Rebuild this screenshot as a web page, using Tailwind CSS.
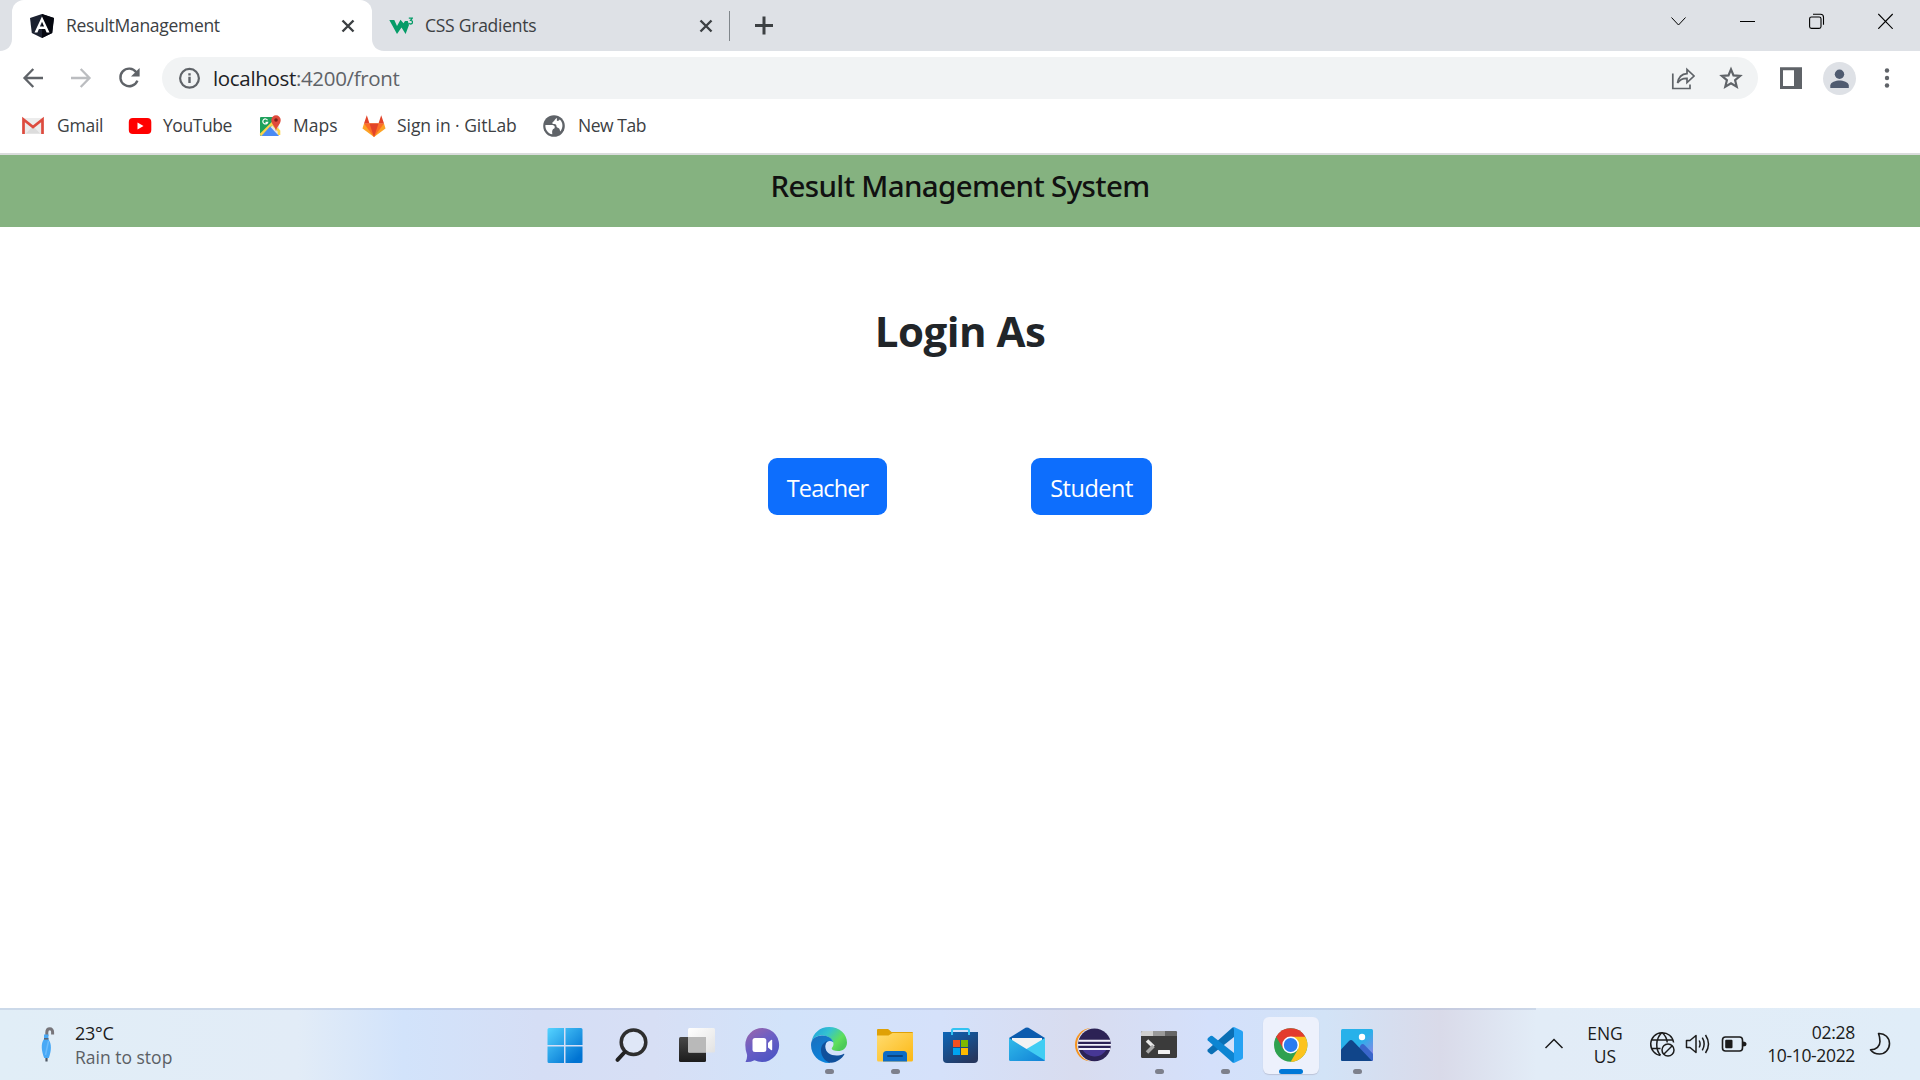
<!DOCTYPE html>
<html lang="en">
<head>
<meta charset="utf-8">
<title>ResultManagement</title>
<script src="https://cdn.jsdelivr.net/npm/@tailwindcss/browser@4"></script>
</head>
<body class="w-[1920px] h-[1080px] overflow-hidden bg-white flex flex-col font-['Open_Sans','Noto_Sans',sans-serif] text-[#3c4043]">

<!-- Tab strip -->
<header class="h-[51px] shrink-0 bg-[#dee1e6] flex items-stretch">
  <svg class="w-3 h-[51px] shrink-0" viewBox="0 0 12 51"><path d="M0 51C7 51 12 46 12 39V51Z" fill="#fff"/></svg>
  <div class="w-[360px] shrink-0 bg-white rounded-t-xl flex items-center pl-[18px] pr-[17px]">
    <svg class="size-6 shrink-0" viewBox="0 0 24 24"><path d="M12 0L24 4L22.2 19L12 24L1.8 19L0 4Z" fill="#1b2130"/><path d="M12 0L24 4L22.2 19L12 24Z" fill="#05070f"/><path fill-rule="evenodd" d="M12 2.500L19.500 18.500H16.600L15.100 15H8.900L7.400 18.500H4.500ZM12 7.800L9.900 12.600H14.100Z" fill="#fff"/></svg>
    <span class="ml-3 grow text-[17.5px] tracking-[-0.3px] whitespace-nowrap">ResultManagement</span>
    <svg class="size-[14px] shrink-0" viewBox="0 0 14 14"><path d="M1.5 1.5L12.5 12.5M12.5 1.5L1.5 12.5" stroke="#3c4043" stroke-width="2.4"/></svg>
  </div>
  <svg class="w-3 h-[51px] shrink-0" viewBox="0 0 12 51"><path d="M12 51C5 51 0 46 0 39V51Z" fill="#fff"/></svg>
  <div class="w-[345px] shrink-0 flex items-center pl-[5px] pr-4">
    <svg class="w-6 h-[18px] shrink-0" viewBox="0 0 24 18"><path d="M0.3 3H5.3L8 9L11.5 2.8L14.5 6.2L16 4H18.8L20 8L16.6 17L12.500 10.500L8 17Z" fill="#059c68"/><path d="M19.800 1.200H23.200L21.600 3.400C24.400 3.600 24 7 21.600 7C20.600 7 20 6.600 19.600 6" fill="none" stroke="#059c68" stroke-width="1.300"/></svg>
    <span class="ml-3 grow text-[17.5px] tracking-[-0.25px] whitespace-nowrap">CSS Gradients</span>
    <svg class="size-[14px] shrink-0" viewBox="0 0 14 14"><path d="M1.5 1.5L12.5 12.5M12.5 1.5L1.5 12.5" stroke="#3c4043" stroke-width="2.4"/></svg>
  </div>
  <div class="w-px h-[30px] self-center bg-[#80868b]"></div>
  <svg class="w-[18px] h-[51px] ml-[25px] shrink-0" viewBox="0 0 18 51"><path d="M0 25.5H18M9 16.5V34.5" stroke="#3c4043" stroke-width="3"/></svg>
  <div class="ml-auto flex gap-[53px] pt-[13px] pr-[26px] text-black">
    <svg class="size-4" viewBox="0 0 16 16" fill="none" stroke="currentColor"><path d="M0.5 4.500L7.500 12L14.500 4.500"/></svg>
    <svg class="size-4" viewBox="0 0 16 16"><path d="M0 8.5H15" stroke="currentColor"/></svg>
    <svg class="size-4" viewBox="0 0 16 16" fill="none" stroke="currentColor" stroke-width="1.100"><rect x="0.600" y="4" width="11.400" height="11.400" rx="1.800"/><path d="M4 1.200H11.500C13.600 1.200 14.500 2.600 14.500 4.200V11.800"/></svg>
    <svg class="size-4" viewBox="0 0 16 16"><path d="M0.300 1L14.700 15.800M14.700 1L0.300 15.800" stroke="currentColor" stroke-width="1.100"/></svg>
  </div>
</header>

<!-- Toolbar -->
<div class="h-[54px] shrink-0 flex items-center pl-[21px] text-[#5f6368]">
  <svg class="size-6" viewBox="0 0 24 24" fill="none" stroke="currentColor" stroke-width="2.3"><path d="M22 12H3.5M12.3 3L3.5 12L12.3 21"/></svg>
  <svg class="size-6 ml-6 text-[#bbbdc0]" viewBox="0 0 24 24" fill="none" stroke="currentColor" stroke-width="2.3"><path d="M2 12H20.5M11.7 3L20.5 12L11.7 21"/></svg>
  <svg class="size-6 ml-6" viewBox="0 0 24 24"><path d="M19.3 6.2A8.8 8.8 0 1 0 20.4 14.6" fill="none" stroke="currentColor" stroke-width="2.4"/><path d="M22.6 2V10.6H14Z" fill="currentColor"/></svg>
  <div class="ml-[21px] w-[1596px] h-[42px] rounded-full bg-[#f1f3f4] flex items-center pl-[17px] pr-[15px]">
    <svg class="size-[22px]" viewBox="0 0 22 22"><circle cx="10.5" cy="11.3" r="9.4" fill="none" stroke="currentColor" stroke-width="2.200"/><path d="M10.5 9.8V16M10.5 6.2V8.4" stroke="currentColor" stroke-width="2.400"/></svg>
    <div class="ml-3 grow text-[20.5px] tracking-[-0.33px]"><span class="text-[#202124]">localhost</span>:4200/front</div>
    <svg class="size-6" viewBox="0 0 24 24" fill="none" stroke="currentColor" stroke-width="1.7"><path d="M1.8 7.5V22.5H19V18.5"/><path d="M6.5 17C7.5 10.8 10.5 8 16 7.6V3.4L23 10L16 16.6V12.4C11.5 12.2 8.8 13.8 6.5 17Z"/></svg>
    <svg class="size-6 ml-6" viewBox="0 0 24 24" fill="none" stroke="currentColor" stroke-width="2.200"><path d="M12 3.3L14.5 9.4L21.1 9.9L16.1 14.2L17.7 20.6L12 17.2L6.3 20.6L7.9 14.2L2.9 9.9L9.5 9.4Z"/></svg>
  </div>
  <svg class="size-6 ml-[21px]" viewBox="0 0 24 24"><path fill-rule="evenodd" d="M1 1.3H23V23H1ZM4 4.3V20H15V4.3Z" fill="currentColor"/></svg>
  <svg class="size-[33px] ml-5" viewBox="0 0 33 33"><circle cx="16.5" cy="16.500" r="16.5" fill="#dee1e6"/><circle cx="16.5" cy="12.3" r="4.7" fill="#4f5b70"/><path d="M7.3 26V23.5C7.3 20 13 18.4 16.5 18.4S25.8 20 25.8 23.5V26Z" fill="#4f5b70"/></svg>
  <svg class="size-6 ml-[19px]" viewBox="0 0 24 24" fill="currentColor"><circle cx="12" cy="4.5" r="2.2"/><circle cx="12" cy="12" r="2.2"/><circle cx="12" cy="19.5" r="2.2"/></svg>
</div>

<!-- Bookmarks bar -->
<nav class="h-[50px] shrink-0 flex items-start pl-[21px] border-b-2 border-[#dadcdc] text-[17.5px] whitespace-nowrap leading-[41px]">
  <div class="w-[107px] flex items-center gap-3">
    <svg class="size-6" viewBox="0 0 24 24"><rect x="1.5" y="4" width="21" height="16" rx="1" fill="#ececec"/><path d="M5 19.5L12 12L19 19.5Z" fill="#dcdcdc"/><path d="M2.5 20V5.5L12 13L21.5 5.5V20" fill="none" stroke="#dd4b3e" stroke-width="2.7"/></svg><span class="tracking-[-0.250px]">Gmail</span>
  </div>
  <div class="w-[130px] flex items-center gap-[11px]">
    <svg class="size-6" viewBox="0 0 24 24"><rect x="0.8" y="4" width="22.5" height="16" rx="4" fill="#f00"/><path d="M9.5 8.5L15.5 12L9.5 15.5Z" fill="#fff"/></svg><span class="tracking-[-0.45px]">YouTube</span>
  </div>
  <div class="w-[104px] flex items-center gap-[11px]">
    <svg class="size-6" viewBox="0 0 24 24"><rect x="2" y="3" width="19" height="19" rx="1.5" fill="#e6e8ea"/><path d="M3 3H16L18 8L3 22Q2 22 2 20V4Q2 3 3 3Z" fill="#1fa15c"/><path d="M2.5 21L14 9.5L21 17V21" fill="none" stroke="#fbd34a" stroke-width="2.6"/><path d="M12 12.5L21 22H3.5Z" fill="#4a8af4"/><path d="M9.5 6.2A2.5 2.5 0 1 0 9.7 8.3H7.5" fill="none" stroke="#fff" stroke-width="1.2"/><path d="M18 17.5C17.5 12 13.3 10.500 13.3 6A4.700 4.700 0 0 1 22.700 6C22.700 10.500 18.500 12 18 17.500Z" fill="#e04a3c"/><circle cx="18" cy="6" r="1.800" fill="#7c2019"/></svg><span>Maps</span>
  </div>
  <div class="w-[180px] flex items-center gap-[11px]">
    <svg class="size-6" viewBox="0 0 24 24"><path d="M12 23L0.500 14.500L2 9.500H22L23.500 14.500Z" fill="#fca326"/><path d="M12 23L2 9.500H22Z" fill="#fc6d26"/><path d="M12 23L7.500 9.500H16.500ZM2 9.500L4.800 1.200L7.500 9.500ZM22 9.500L19.200 1.200L16.500 9.500Z" fill="#e24329"/></svg><span class="tracking-[-0.050px]">Sign in · GitLab</span>
  </div>
  <div class="flex items-center gap-3">
    <svg class="size-6" viewBox="0 0 24 24"><circle cx="12" cy="12" r="10.800" fill="#5f6368"/><path d="M13.500 3.500C11.500 4.500 11 6 12 7.500H9.500C9.500 9.500 8.500 10 7 10.200C7 11.800 9.500 12 11 12C13.500 12 14 14 12.800 15.500C11.500 17 10.500 17.500 10.300 20.300C5.500 19.600 3 15.500 3.300 11.500H7C5.500 11 7.500 6 13.500 3.500Z" fill="#5f6368"/><path d="M3.400 11H9.500C12.500 11 13.500 12.800 12.300 14.500C10.500 15 9.800 16.500 10.300 20.300C6 19.600 3 15.500 3.400 11Z" fill="#fff"/><path d="M15 4C13 5 12.500 6.500 11.500 7.500C9.800 8.500 10 10 11.500 10C14 9.600 14.500 11 14.500 12.500C14.500 14 17 13.500 17.500 15C17.600 16 18 16.800 18.300 17.500C21.300 14 21.300 8 17.500 5.500C17 7 15.500 7.300 14.800 6.500Z" fill="#fff"/></svg><span class="tracking-[-0.45px]">New Tab</span>
  </div>
</nav>

<!-- Page -->
<main class="grow flex flex-col items-center">
  <div class="w-full h-[72px] shrink-0 bg-[#85b280] text-center text-[#111] font-['Noto_Sans'] text-[29.5px] leading-[61px] font-medium tracking-[-0.65px]">Result Management System</div>
  <h1 class="mt-[79px] text-[42px] leading-[50px] font-bold tracking-[-0.5px] text-[#212529]">Login As</h1>
  <div class="mt-[102px] flex gap-36 text-white text-[23.5px]">
    <button class="w-[119px] h-[57px] pt-1 rounded-[9px] bg-[#0d6efd] tracking-[-0.9px]">Teacher</button>
    <button class="w-[121px] h-[57px] pt-1 rounded-[9px] bg-[#0d6efd] tracking-[-0.5px]">Student</button>
  </div>
</main>

<!-- Taskbar -->
<footer class="relative h-[72px] shrink-0 flex items-center text-[#1b1b1b] bg-[linear-gradient(90deg,#e1eef7_0%,#e2ecf7_15.5%,#d2e3fb_21%,#d5def5_28%,#d7dff5_34%,#d2e3fa_41%,#d5e1fa_49%,#d8dcef_56%,#d4e0fb_63%,#d2e3f7_69%,#d9dae9_75%,#e2ecf7_80%,#e0edf8_100%)]">
  <div class="absolute left-0 top-0 w-[1536px] h-0.5 bg-[#8c9bc0]/25"></div>
  <div class="w-[532px] flex items-center pl-[37px] pt-0.5">
    <svg class="w-6 h-9" viewBox="0 0 24 36"><path d="M9.800 9V5.500C9.800 0.600 16 0.600 15.600 5.500V7.500" fill="none" stroke="#77757a" stroke-width="3"/><path d="M7 7.500H11.500L11.300 12C15 17 14.500 24 11.800 31H7.200C4.500 24 3.500 17 7 12Z" fill="#48a9f6"/><path d="M7 11.800H11.500" stroke="#5b6370" stroke-width="1.500"/><path d="M11.500 14L8.500 28" stroke="#6cbcfb" stroke-width="1.500"/><path d="M9.500 31V34.500" stroke="#4e5864" stroke-width="2.200"/></svg>
    <div class="ml-[14px] text-[18px] leading-6"><div class="tracking-[-0.3px]">23°C</div><div class="text-[17.500px] text-[#5b6065]">Rain to stop</div></div>
  </div>

  <div class="flex h-full">
    <div class="w-[66px] flex items-center justify-center pt-0.5">
      <svg class="size-10" viewBox="0 0 40 40"><defs><linearGradient id="win" gradientUnits="userSpaceOnUse" x1="3" y1="3" x2="32" y2="34"><stop stop-color="#55d3ff"/><stop offset="1" stop-color="#0073d2"/></linearGradient></defs><path d="M4 3H19V20H2.500V4.500Q2.500 3 4 3ZM20.500 3H36Q37.500 3 37.500 4.500V20H20.500ZM2.500 21.500H19V38H4Q2.500 38 2.500 36.500ZM20.500 21.500H37.500V36.500Q37.500 38 36 38H20.500Z" fill="url(#win)"/></svg>
    </div>
    <div class="w-[66px] flex items-center justify-center pt-0.5">
      <svg class="size-10" viewBox="0 0 40 40"><circle cx="22.500" cy="17.300" r="12.300" fill="#dfe7f7" stroke="#2e2e2e" stroke-width="3.500"/><path d="M13.800 27L6.500 34.800" stroke="#222" stroke-width="4" stroke-linecap="round"/></svg>
    </div>
    <div class="w-[66px] flex items-center justify-center pt-0.5">
      <svg class="size-10" viewBox="0 0 40 40"><defs><linearGradient id="dk" x1="0" y1="0" x2="0" y2="1"><stop stop-color="#484848"/><stop offset="1" stop-color="#1c1c1c"/></linearGradient><linearGradient id="lt" x1="0" y1="0" x2="1" y2="1"><stop stop-color="#fff"/><stop offset="1" stop-color="#e2e2e2"/></linearGradient></defs><rect x="2" y="12" width="27" height="25" rx="1.500" fill="url(#dk)"/><rect x="11" y="3" width="27" height="24.500" rx="1.500" fill="url(#lt)"/><path d="M11 12H29V27.500H12Q11 27.500 11 26.500Z" fill="#b9b9b9"/></svg>
    </div>
    <div class="w-[66px] flex items-center justify-center pt-0.5">
      <svg class="size-10" viewBox="0 0 40 40"><defs><linearGradient id="chat" x1="0" y1="0" x2=".6" y2="1"><stop stop-color="#a066a8"/><stop offset=".5" stop-color="#6c5fc4"/><stop offset="1" stop-color="#4f55c4"/></linearGradient></defs><path d="M19.300 3A17 17 0 1 1 11.500 35.200Q7 37.500 2.500 37Q4.500 33 4 29.500Q2.300 25 2.300 20A17 17 0 0 1 19.300 3Z" fill="url(#chat)"/><rect x="9.500" y="13" width="13.800" height="14" rx="2.500" fill="#fff"/><path d="M25 18L28 15Q29.200 14.300 29.200 15.500V24.500Q29.200 25.700 28 25L25 22.500Z" fill="#fff"/></svg>
    </div>
    <div class="relative w-[66px] flex items-center justify-center pt-0.5">
      <svg class="size-10" viewBox="1 0 40 40"><defs><linearGradient id="e1" x1="0" y1="0" x2="1" y2=".6"><stop stop-color="#1b9de2"/><stop offset=".45" stop-color="#35c3cf"/><stop offset=".8" stop-color="#5fdf5c"/><stop offset="1" stop-color="#4ccb58"/></linearGradient><linearGradient id="e2" x1="0" y1="0" x2=".5" y2="1"><stop stop-color="#1c6fbd"/><stop offset="1" stop-color="#0a84dc"/></linearGradient></defs><path d="M3.500 17C5 8 12 2 21 2C32 2 39 9.500 39 17.500C39 23.500 34.500 26 30 26C26 26 23.700 25 23.700 23.600C23.700 22.500 25.500 21.700 25.500 19C25.500 14.500 20 10.500 14 10.500C9 10.500 5 13 3.500 17Z" fill="url(#e1)"/><path d="M3 20C3 14 8 10.500 14 10.500C20 10.500 24.500 13.500 25.300 17.300C20.500 14 17 18 17 22C17 30 25 38 21 38C11 38 3 30 3 20Z" fill="url(#e2)"/><path d="M20 15.800C15.500 17 13 21 13 25C13 32 18 37.500 23 37.700C29 37.500 34 33.500 36.300 29.500C36.600 28.700 36 28.600 35.500 28.900C28 32.500 17.300 30 17.300 21.500C17.300 19 18.300 17 20 15.800Z" fill="#10509b"/></svg>
      <div class="absolute bottom-1.5 left-[29px] w-[9px] h-[5px] rounded-full bg-[#7d808c]"></div>
    </div>
    <div class="relative w-[66px] flex items-center justify-center pt-0.5">
      <svg class="size-10" viewBox="1 0 40 40"><defs><linearGradient id="fo" x1="0" y1="0" x2="1" y2="1"><stop stop-color="#ffdc70"/><stop offset="1" stop-color="#fcb814"/></linearGradient></defs><path d="M3 5Q3 4 4 4H13.500Q14.500 4 15.300 5L17.500 7H38Q39 7 39 8V12H3Z" fill="#dfa106"/><path d="M3 10.500H14.500L18.500 8H39V35Q39 36.500 37.500 36.500H4.500Q3 36.500 3 35Z" fill="url(#fo)"/><path d="M9 36.500V29.500Q9 26 12.500 26H29.500Q33 26 33 29.500V36.500Z" fill="#0c6cc6"/><path d="M14 31H28" stroke="#0a4480" stroke-width="2" stroke-linecap="round"/></svg>
      <div class="absolute bottom-1.5 left-[29px] w-[9px] h-[5px] rounded-full bg-[#7d808c]"></div>
    </div>
    <div class="w-[66px] flex items-center justify-center pt-0.5">
      <svg class="size-10" viewBox="1 0 40 40"><defs><linearGradient id="st" x1="0" y1="0" x2=".7" y2="1"><stop stop-color="#0c66b8"/><stop offset="1" stop-color="#26375f"/></linearGradient></defs><path d="M3 7H38V34Q38 38 34 38H7Q3 38 3 34Z" fill="url(#st)"/><path d="M12 10V5.500Q12 4 13.500 4H27.500Q29 4 29 5.500V10" fill="none" stroke="#32c3f2" stroke-width="2"/><path d="M13 15H20V22H13Z" fill="#f25022"/><path d="M21 15H28V22H21Z" fill="#7fba00"/><path d="M13 23H20V30H13Z" fill="#00a4ef"/><path d="M21 23H28V30H21Z" fill="#ffb900"/></svg>
    </div>
    <div class="w-[66px] flex items-center justify-center pt-0.5">
      <svg class="size-10" viewBox="1 0 40 40"><defs><linearGradient id="ml" x1="0" y1="0" x2="1" y2="1"><stop stop-color="#31bbea"/><stop offset="1" stop-color="#1181d6"/></linearGradient></defs><path d="M3 13L19.500 2.800Q21 2 22.500 2.800L39 13L36 20H6Z" fill="#0c5cae"/><path d="M6 13H36V24L21 32L6 24Z" fill="#f3f3f3"/><path d="M39 13V34.500L37.500 36L18 25.500Z" fill="#41cdf3"/><path d="M3 13L39 35.500Q38.500 36 37.500 36H4.500Q3 36 3 34.500Z" fill="url(#ml)"/></svg>
    </div>
    <div class="w-[66px] flex items-center justify-center pt-0.5">
      <svg class="size-10" viewBox="1 0 40 40"><ellipse cx="18.500" cy="19.800" rx="15.500" ry="16.500" fill="#f7941e"/><circle cx="22" cy="19.800" r="17" fill="#d8dff3"/><circle cx="22.500" cy="19.800" r="16.400" fill="#2c2255"/><path d="M10 24H35Q30 32 22 31.500Q14 31 10 24Z" fill="#473794"/><path d="M6.500 15.800H38.500M6 19.900H39M6.500 24H38.500" stroke="#f2f2fa" stroke-width="1.900"/></svg>
    </div>
    <div class="relative w-[66px] flex items-center justify-center pt-0.5">
      <svg class="size-10" viewBox="1 0 40 40"><rect x="3" y="6" width="36" height="27" rx="1.500" fill="#3b3b3b"/><path d="M4.500 6H15V11H3V7.500Q3 6 4.500 6Z" fill="#cfcfcf"/><path d="M15 6H27V11H15Z" fill="#999"/><path d="M27 6H37.500Q39 6 39 7.500V11H27Z" fill="#666"/><path d="M9 15.500L15.500 21.700" stroke="#e8e8e8" stroke-width="3.600"/><path d="M15.500 21L9 27.500" stroke="#a8a8a8" stroke-width="3.600"/><rect x="20" y="25" width="12" height="4" rx=".5" fill="#f0f0f0"/></svg>
      <div class="absolute bottom-1.5 left-[29px] w-[9px] h-[5px] rounded-full bg-[#7d808c]"></div>
    </div>
    <div class="relative w-[66px] flex items-center justify-center pt-0.5">
      <svg class="size-10" viewBox="1 0 40 40"><path d="M4 27L6.500 29Q7.500 29.500 8.500 29L30 12V3L28.500 2.500L3.800 24.500Q2.800 26 4 27Z" fill="#0a6fb5"/><path d="M4 13L6.500 11Q7.500 10.500 8.500 11L30 28V37L28.500 37.500L3.800 15.500Q2.800 14 4 13Z" fill="#0d85d2"/><path d="M28.500 2.200Q29.500 1.700 30.500 2.200L38 5.700Q39 6.300 39 7.500V32.500Q39 33.700 38 34.300L30.500 37.800Q29.500 38.300 28.500 37.800Q30 37 30 35V5Q30 3 28.500 2.200Z" fill="#26a2f3"/></svg>
      <div class="absolute bottom-1.5 left-[29px] w-[9px] h-[5px] rounded-full bg-[#7d808c]"></div>
    </div>
    <div class="relative w-[66px] flex items-center justify-center">
      <div class="w-14 h-[57px] mt-[2px] rounded-md bg-[#edf1fc] shadow-[0_1px_1px_#bcc4d8] flex items-center justify-center">
        <svg class="size-10" viewBox="0 0 40 40"><circle cx="19.700" cy="20" r="16.700" fill="#2fa14f"/><path d="M19.700 20L5.200 11.700A16.700 16.700 0 0 1 34.200 11.700Z" fill="#e33b2e"/><path d="M19.700 11.700H34.200A16.700 16.700 0 0 1 19.700 36.700L27 24.200Z" fill="#fcc31e"/><path d="M5.200 11.700L12.500 24.200L19.700 20L19.700 11.700Z" fill="#e33b2e"/><circle cx="19.700" cy="20" r="8.400" fill="#fff"/><circle cx="19.700" cy="20" r="6.900" fill="#2c7cf0"/></svg>
      </div>
      <div class="absolute bottom-1.5 left-[21px] w-6 h-[5px] rounded-full bg-[#0078d7]"></div>
    </div>
    <div class="relative w-[66px] flex items-center justify-center pt-0.5">
      <svg class="size-10" viewBox="1 0 40 40"><defs><linearGradient id="ph" x1="0" y1="0" x2="1" y2="1"><stop offset=".5" stop-color="#27b1ea"/><stop offset="1" stop-color="#a57be6"/></linearGradient><clipPath id="pc"><rect x="5" y="4" width="32" height="32" rx="1.500"/></clipPath></defs><g clip-path="url(#pc)"><path d="M5 4H37V36H5Z" fill="url(#ph)"/><path d="M16 36L24.500 20.500Q26.500 18 28.500 20L40 32V36Z" fill="#3a66cb"/><path d="M0 30L13 16Q15 14 17 16L36 36H0Z" fill="#10458a"/></g><circle cx="26" cy="12" r="3.200" fill="#fff"/></svg>
      <div class="absolute bottom-1.5 left-[29px] w-[9px] h-[5px] rounded-full bg-[#7d808c]"></div>
    </div>
  </div>

  <!-- System tray -->
  <div class="ml-auto pr-[29px] flex items-center">
    <svg class="w-5 h-3" viewBox="0 0 20 12"><path d="M1.500 10L10 1.500L18.500 10" fill="none" stroke="currentColor" stroke-width="1.500"/></svg>
    <div class="ml-[21px] mt-px w-10 text-center text-[17.500px] leading-[23px]">ENG<br>US</div>
    <svg class="ml-6 size-[26px]" viewBox="0 0 26 26" fill="none" stroke="currentColor" stroke-width="1.500"><path d="M24.600 11.500A11.500 11.500 0 1 0 11.500 24.500M3 9H23.500M3 17.500H11.500M13 1.500C6 8 6.500 18.500 11.500 24.300M13 1.500C16.500 4.500 18 8 18.200 11.500"/><circle cx="19" cy="19" r="6"/><path d="M15 23L23 15"/></svg>
    <svg class="ml-[10px] size-[26px]" viewBox="0 0 26 26" fill="none" stroke="currentColor" stroke-width="1.500" stroke-linejoin="round"><path d="M1.500 9.500H5L11 4.500V21.500L5 16.500H1.500ZM14.200 9.500Q16 13 14.200 16.500M17.300 6.700Q21 13 17.300 19.300M20.500 4Q26.500 13 20.500 22"/></svg>
    <svg class="ml-[10px] w-[26px] h-[18px]" viewBox="0 0 26 18"><rect x="1.500" y="2" width="20" height="14" rx="3" fill="none" stroke="currentColor" stroke-width="1.600"/><rect x="4.200" y="4.800" width="7.300" height="8.400" rx="1" fill="currentColor"/><path d="M22 6.500Q25.500 6.500 25.500 9Q25.500 11.500 22 11.500Z" fill="currentColor"/></svg>
    <div class="ml-[18px] w-[90px] flex flex-col items-end text-[17.500px] leading-[23px] whitespace-nowrap"><span class="tracking-[-0.250px]">02:28</span><span class="tracking-[-0.350px]">10-10-2022</span></div>
    <svg class="ml-[14px] w-[22px] h-6" viewBox="0 0 22 24"><path d="M9.500 1.500C16 1 20.500 6 20.500 11.500C20.500 17.500 16 22 10.500 22C7 22 3.500 20.500 1.500 17.800C7.500 17.800 11 14 11 9.500C11 6.500 10.500 4 9.500 1.500Z" fill="none" stroke="currentColor" stroke-width="1.600" stroke-linejoin="round"/></svg>
  </div>
</footer>
</body>
</html>
